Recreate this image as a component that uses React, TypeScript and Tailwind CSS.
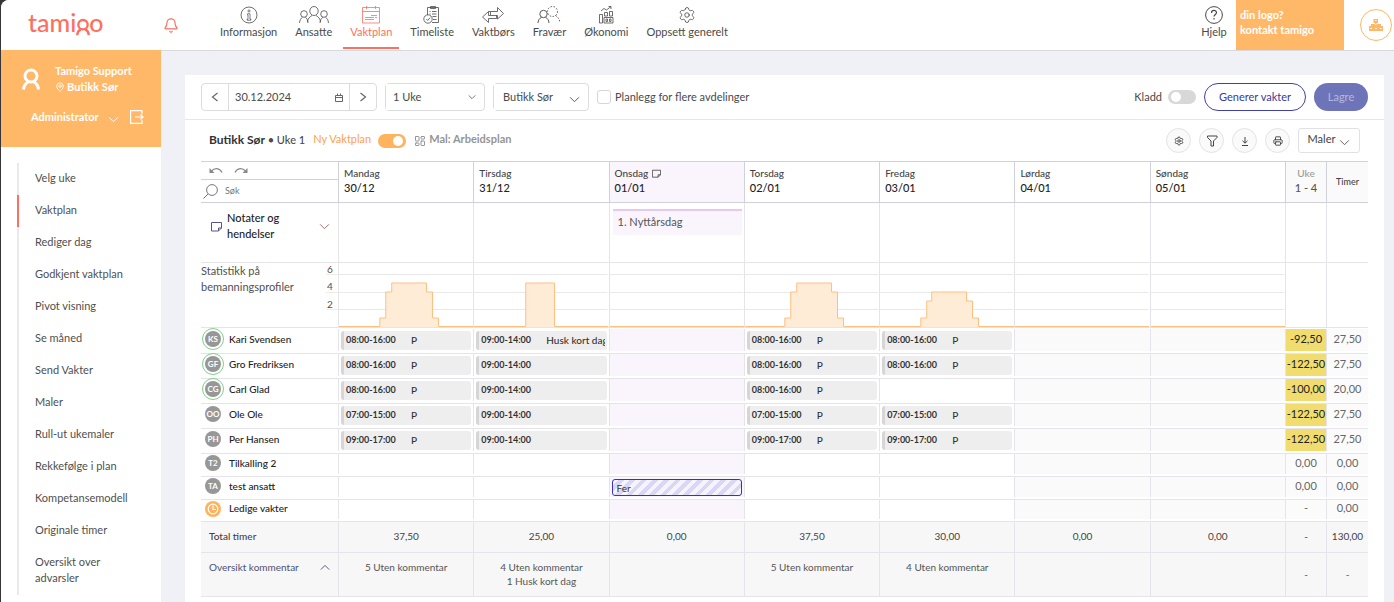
import React from "react";
import {
  Bell,
  LayoutDashboard,
  MapPin,
  Settings,
  Printer,
} from "lucide-react";

type IconProps = { className?: string };

function PersonMark({ className }: IconProps) {
  return (
    <svg viewBox="0 0 18 22" className={className} fill="none" stroke="currentColor" strokeWidth="3" aria-hidden="true">
      <circle cx="9" cy="8" r="6" />
      <path d="M1.500 21.500c.4-4.300 2.200-6.300 4.700-7.500M16.500 21.500c-.4-4.300-2.200-6.300-4.700-7.500" />
    </svg>
  );
}

function WideChevron({ className }: IconProps) {
  return (
    <svg viewBox="0 0 12 8" className={className} fill="none" stroke="currentColor" strokeWidth="1.100" aria-hidden="true">
      <path d="M1 1.500L6 6.500L11 1.500" />
    </svg>
  );
}

function SideChevron({ className }: IconProps) {
  return (
    <svg viewBox="0 0 8 10" className={className} fill="none" stroke="currentColor" strokeWidth="1.200" aria-hidden="true">
      <path d="M6.500 1L1.500 5L6.500 9" />
    </svg>
  );
}

function NoteIcon({ className }: IconProps) {
  return (
    <svg viewBox="0 0 11 11" className={className} fill="none" stroke="currentColor" aria-hidden="true">
      <path d="M.5 1.500h10v5.500l-3 3h-7zM10.500 7h-3v3" />
    </svg>
  );
}

function CurvedArrow({ className }: IconProps) {
  return (
    <svg viewBox="0 0 14 7" className={className} fill="none" stroke="currentColor" strokeWidth="1.200" aria-hidden="true">
      <path d="M2.500 4C5.500.5 10.500.5 13 5.500" />
      <path d="M.5 1v5h5z" fill="currentColor" stroke="none" />
    </svg>
  );
}

function TopIcon({ children, wide }: { children: React.ReactNode; wide?: boolean }) {
  return (
    <svg
      viewBox={wide ? "0 0 30 18" : "0 0 20 18"}
      className={wide ? "h-[18px] w-[30px]" : "h-[18px] w-5"}
      fill="none"
      stroke="currentColor"
      strokeWidth=".8"
      aria-hidden="true"
    >
      {children}
    </svg>
  );
}

const infoIcon = (
  <TopIcon>
    <circle cx="10" cy="9" r="8" />
    <circle cx="10" cy="5" r="1.100" strokeWidth=".7" />
    <path d="M8.500 7.800h2.500v5.400h1v1H8v-1h1V8.800h-.5z" strokeWidth=".7" />
  </TopIcon>
);

const staffIcon = (
  <TopIcon wide>
    <ellipse cx="15" cy="5" rx="4.200" ry="4.500" />
    <path d="M8.500 16c.3-3.500 2-5 4.500-6.500M21.500 16c-.3-3.500-2-5-4.500-6.500" />
    <circle cx="5" cy="8" r="3.300" />
    <circle cx="25" cy="8" r="3.300" />
    <path d="M.5 17c.2-2.800 1.300-4.600 3-5.700M9 17c-.2-2.800-1-4.600-2.700-5.700M21 17c.2-2.800 1.200-4.600 2.800-5.700M29.500 17c-.2-2.800-1.300-4.600-3-5.700" />
  </TopIcon>
);

const planIcon = (
  <TopIcon>
    <path d="M1.500 1.500h17v15.500h-17zM1.500 5.500h17M5.500 0v3M14.500 0v3M10 9.500h6M4 11.500h9M14 11.500h2M4 13.500h9" />
  </TopIcon>
);

const timesheetIcon = (
  <TopIcon>
    <path d="M5.500 9V1.500h11v15H10M8.500.5h5v2h-5zM7.500 5.500h1M10 5.500h4.500M7.500 8h1M10 8h4.500M10.500 10.500h4M11 13.500h3.500" />
    <circle cx="6" cy="13" r="4.200" />
    <path d="M4.300 13l1.400 1.400 2.500-2.800" />
  </TopIcon>
);

const exchangeIcon = (
  <svg viewBox="0 0 22 18" className="h-[18px] w-[22px]" fill="none" stroke="currentColor" strokeWidth=".8" aria-hidden="true">
    <path d="M8.500 5.500H15.500V1.500L21.500 7.500L15.500 13V9.500H8.500z" />
    <path d="M8.500 5.500H6.500L.5 11L6.500 16.500V12.500H14.500V9.500M6.500 5.500V9.500H8.500" />
  </svg>
);

const absenceIcon = (
  <svg viewBox="0 0 24 18" className="h-[18px] w-6" fill="none" stroke="currentColor" strokeWidth=".9" aria-hidden="true">
    <circle cx="6.500" cy="8" r="3.700" />
    <path d="M1 17c.2-3 1.500-4.600 3.500-5.700M12 17c-.2-3-1.500-4.600-3.500-5.700" />
    <g strokeDasharray="1.500 1.500">
      <circle cx="15.500" cy="5.500" r="5" />
      <path d="M18.500 9.500c2.500 1.500 4 3.500 4.300 7" />
    </g>
  </svg>
);

const economyIcon = (
  <TopIcon>
    <path d="M3.500 8.500h3v8.500h-3zM8.500 6.500h3v3.500h-3zM13.500 5.500h3v4.500h-3zM5 5l3-2.500 2.500 1.500L15 .5M12.500.5H15V3M8 11.500h9v5.500H8zM10 13h1.500v2.500H10zM13.500 13H15v2.500h-1.500z" />
  </TopIcon>
);

const setupIcon = <Settings className="size-[18px]" strokeWidth={1.1} aria-hidden="true" />;

const topNav = [
  { label: "Informasjon", icon: infoIcon },
  { label: "Ansatte", icon: staffIcon },
  { label: "Vaktplan", icon: planIcon, active: true },
  { label: "Timeliste", icon: timesheetIcon },
  { label: "Vaktbørs", icon: exchangeIcon },
  { label: "Fravær", icon: absenceIcon },
  { label: "Økonomi", icon: economyIcon },
  { label: "Oppsett generelt", icon: setupIcon },
];

const sideNav = [
  "Velg uke",
  "Vaktplan",
  "Rediger dag",
  "Godkjent vaktplan",
  "Pivot visning",
  "Se måned",
  "Send Vakter",
  "Maler",
  "Rull-ut ukemaler",
  "Rekkefølge i plan",
  "Kompetansemodell",
  "Originale timer",
  "Oversikt over advarsler",
];

const days = [
  { name: "Mandag", date: "30/12" },
  { name: "Tirsdag", date: "31/12" },
  { name: "Onsdag", date: "01/01", holiday: true },
  { name: "Torsdag", date: "02/01" },
  { name: "Fredag", date: "03/01" },
  { name: "Lørdag", date: "04/01" },
  { name: "Søndag", date: "05/01" },
];

const profiles = [
  "M0 63.500H41V55H47V29H53V20H88V29H94V55H100V63.500H135",
  "M0 63.500H52V20H81V63.500H135",
  "M0 63.500H135",
  "M0 63.500H40V55H46V29H52V20H87V29H93V55H99V63.500H135",
  "M0 63.500H41V55H47V38H52V29H87V38H93V55H99V63.500H135",
  "M0 63.500H135",
  "M0 63.500H135",
];

type Shift = { time: string; note?: string };
type Row = {
  initials: string;
  name: string;
  ring?: boolean;
  shifts: (Shift | null)[];
  week: string;
  hours: string;
  size: "tall" | "mid" | "low";
};

const p = (time: string): Shift => ({ time, note: "P" });
const evening: Shift = { time: "09:00-14:00" };

const rows: Row[] = [
  {
    initials: "KS", name: "Kari Svendsen", ring: true, week: "-92,50", hours: "27,50", size: "tall",
    shifts: [p("08:00-16:00"), { time: "09:00-14:00", note: "Husk kort dag" }, null, p("08:00-16:00"), p("08:00-16:00"), null, null],
  },
  {
    initials: "GF", name: "Gro Fredriksen", ring: true, week: "-122,50", hours: "27,50", size: "tall",
    shifts: [p("08:00-16:00"), evening, null, p("08:00-16:00"), p("08:00-16:00"), null, null],
  },
  {
    initials: "CG", name: "Carl Glad", ring: true, week: "-100,00", hours: "20,00", size: "tall",
    shifts: [p("08:00-16:00"), evening, null, p("08:00-16:00"), null, null, null],
  },
  {
    initials: "OO", name: "Ole Ole", week: "-122,50", hours: "27,50", size: "tall",
    shifts: [p("07:00-15:00"), evening, null, p("07:00-15:00"), p("07:00-15:00"), null, null],
  },
  {
    initials: "PH", name: "Per Hansen", week: "-122,50", hours: "27,50", size: "tall",
    shifts: [p("09:00-17:00"), evening, null, p("09:00-17:00"), p("09:00-17:00"), null, null],
  },
  { initials: "T2", name: "Tilkalling 2", week: "0,00", hours: "0,00", size: "mid", shifts: [null, null, null, null, null, null, null] },
  { initials: "TA", name: "test ansatt", week: "0,00", hours: "0,00", size: "mid", shifts: [null, null, { time: "Fer" }, null, null, null, null] },
  { initials: "", name: "Ledige vakter", week: "-", hours: "0,00", size: "low", shifts: [null, null, null, null, null, null, null] },
];

const rowHeight = { tall: "h-[22px]", mid: "h-5", low: "h-[19px]" };

const totals = ["37,50", "25,00", "0,00", "37,50", "30,00", "0,00", "0,00"];
const comments = [
  ["5 Uten kommentar"],
  ["4 Uten kommentar", "1 Husk kort dag"],
  [],
  ["5 Uten kommentar"],
  ["4 Uten kommentar"],
  [],
  [],
];

function Header() {
  return (
    <header className="flex h-[51px] shrink-0 border-b border-[#d9d9dc] bg-white">
      <div className="flex w-[212px] shrink-0 items-center justify-between pl-[27px] pr-[34px]">
        <a href="#" className="pb-[6px] text-[25px] font-medium leading-8 text-[#ff6f5e]">
          tami
          <span className="relative inline-block">
            <span className="text-transparent">g</span>
            <PersonMark className="absolute left-0 top-3 h-[18px] w-[14px]" />
          </span>
          o
        </a>
        <button type="button" aria-label="Varsler" className="text-[#ff6f5e]">
          <Bell className="h-[17px] w-4" strokeWidth={1.8} />
        </button>
      </div>
      <nav className="flex flex-1 gap-1 text-[11px] text-[#4a4a4a]">
        {topNav.map((item) => (
          <a
            key={item.label}
            href="#"
            className={
              item.active
                ? "flex h-[49px] flex-col items-center border-b-2 border-[#ff6f5e] px-[7px] pt-[6px] leading-[15px] text-[#ff6f5e]"
                : "flex h-[49px] flex-col items-center px-[7px] pt-[6px] leading-[15px]"
            }
          >
            {item.icon}
            {item.label}
          </a>
        ))}
      </nav>
      <a href="#" className="flex w-11 flex-col items-center pt-[6px] text-[11px] leading-4 text-[#4a4a4a]">
        <svg viewBox="0 0 18 18" className="size-[18px]" fill="none" stroke="currentColor" aria-hidden="true">
          <circle cx="9" cy="9" r="8.400" />
          <path d="M6.500 7c0-3.500 5-3.300 5-.4 0 1.800-2.500 1.900-2.500 4M9 12v1.500" strokeWidth="1.200" />
        </svg>
        Hjelp
      </a>
      <div className="h-[50px] w-[108px] bg-[#ffb868] px-1 pt-[7px] text-[11px] font-bold leading-[15px] text-white">
        din logo?
        <br />
        kontakt tamigo
      </div>
      <div className="flex h-[50px] w-[50px] items-center justify-end pr-[2px]">
        <button type="button" aria-label="Organisasjon" className="flex size-8 items-center justify-center rounded-full border border-[#ffb868] text-[#ffb868]">
          <svg viewBox="0 0 16 14" className="h-[14px] w-4" fill="currentColor" aria-hidden="true">
            <path fillRule="evenodd" d="M5.500 1h4.500v4H5.500zM7.200 2v1h1.300V2zM7.200 5h1.200v2H7.200zM3 6h10v2H3zM1 8h4.500v5H1zM2.400 10v1H4V10zM5.500 8h4.800v5H5.500zM7.200 10v1h1.600V10zM10.300 8H15v5h-4.700zM12 10v1h1.600V10z" />
          </svg>
        </button>
      </div>
    </header>
  );
}

function Sidebar() {
  return (
    <aside className="w-40 shrink-0 bg-white">
      <div className="-mt-px h-[97px] bg-[#ffb868] pt-[13px] text-[11px] font-bold leading-4 text-white">
        <div className="flex items-center pl-[21px]">
          <PersonMark className="h-[22px] w-[18px]" />
          <div className="pl-[15px]">
            <div>Tamigo Support</div>
            <div className="flex items-center gap-[2px]">
              <MapPin className="size-[10px]" strokeWidth={2} aria-hidden="true" />
              Butikk Sør
            </div>
          </div>
        </div>
        <div className="flex items-center pl-[30px] pt-[14px]">
          <button type="button" className="flex w-[88px] items-center justify-between">
            Administrator
            <WideChevron className="mt-1 h-[7px] w-[11px]" />
          </button>
          <button type="button" aria-label="Logg ut" className="pl-[11px]">
            <svg viewBox="0 0 14 14" className="size-[14px]" fill="none" stroke="currentColor" strokeWidth="1.200" aria-hidden="true">
              <path d="M12 4V.6H.6v12.800H12V10M5 7h8M10.500 4.500L13 7l-2.500 2.500" />
            </svg>
          </button>
        </div>
      </div>
      <nav className="ml-4 mt-4 w-[122px] text-[11px] leading-4 text-[#4f4f4f]">
        {sideNav.map((label) => (
          <a
            key={label}
            href="#"
            className={
              label === sideNav[1]
                ? "block border-l-2 border-[#ff6f5e] pb-[9px] pl-4 pt-[7px]"
                : "block border-l-2 border-[#eaeaea] pb-[9px] pl-4 pt-[7px]"
            }
          >
            {label}
          </a>
        ))}
      </nav>
    </aside>
  );
}

function Toolbar() {
  return (
    <div className="flex h-[45px] items-center gap-2 border-b border-[#e6e6e9] px-4 text-[11px] text-[#4a4a4a]">
      <div className="flex h-7 w-44 items-stretch rounded border border-[#dcdcde]">
        <button type="button" aria-label="Forrige" className="flex w-[27px] items-center justify-center border-r border-[#dcdcde] text-[#666]">
          <SideChevron className="h-[10px] w-2" />
        </button>
        <label className="flex min-w-0 flex-1 items-center pr-[6px]">
          <input aria-label="Dato" defaultValue="30.12.2024" className="w-full min-w-0 pl-[6px] outline-none" />
          <svg viewBox="0 0 8 9" className="h-[9px] w-2 shrink-0" fill="none" stroke="#666" aria-hidden="true">
            <path d="M.5 2.500h7v6h-7zM.5 4.500h7M2.500.5v2M5.500.5v2" />
          </svg>
        </label>
        <button type="button" aria-label="Neste" className="flex w-[27px] items-center justify-center border-l border-[#dcdcde] text-[#666]">
          <SideChevron className="h-[10px] w-2 rotate-180" />
        </button>
      </div>
      <div className="flex h-7 w-[100px] items-center rounded border border-[#dcdcde] pr-2">
        <select aria-label="Periode" className="h-full min-w-0 flex-1 appearance-none bg-white pl-[7px] outline-none">
          <option>1 Uke</option>
        </select>
        <WideChevron className="h-[6px] w-2 shrink-0" />
      </div>
      <div className="flex h-7 w-24 items-center rounded border border-[#dcdcde] pr-2">
        <select aria-label="Avdeling" className="h-full min-w-0 flex-1 appearance-none bg-white pl-[9px] outline-none">
          <option>Butikk Sør</option>
        </select>
        <WideChevron className="mt-1 h-[7px] w-[11px] shrink-0 text-[#3a5a80]" />
      </div>
      <label className="flex items-center gap-1">
        <input type="checkbox" className="size-[14px] appearance-none rounded-[3px] border border-[#d6d6d8] bg-white" />
        Planlegg for flere avdelinger
      </label>
      <label className="ml-auto flex items-center gap-[6px]">
        Kladd
        <span className="flex h-[14px] w-7 items-center rounded-full bg-[#d8d8d8] px-[3px]">
          <input type="checkbox" className="size-[10px] appearance-none rounded-full bg-white" />
        </span>
      </label>
      <button type="button" className="h-7 w-[102px] rounded-full border border-[#4040a8] text-[#3a3a9c]">
        Generer vakter
      </button>
      <button type="button" className="h-7 w-[54px] rounded-full bg-[#6e74b8] text-[#b4b8e0]">
        Lagre
      </button>
    </div>
  );
}

const roundButton = "flex size-[25px] items-center justify-center rounded-full border border-[#e3e3e8] bg-[#fafafa] text-[#444]";

function PlanBar() {
  return (
    <div className="flex h-[41px] items-center pl-6 pr-6 text-[11px]">
      <h1 className="pb-[2px] text-xs font-bold text-[#333]">
        Butikk Sør <span className="text-[11px] font-medium text-[#4a4a4a]">• Uke 1</span>
      </h1>
      <label className="flex items-center gap-[7px] pl-2 text-[#ff9f4c]">
        <span className="pb-[2px]">Ny Vaktplan</span>
        <span className="flex h-[14px] w-7 items-center justify-end rounded-full bg-[#ffb35c] px-[3px]">
          <input type="checkbox" defaultChecked className="size-[10px] appearance-none rounded-full bg-white" />
        </span>
      </label>
      <span className="flex items-center gap-[3px] pl-2 font-bold text-[#959595]">
        <LayoutDashboard className="size-3" strokeWidth={2} strokeLinejoin="miter" aria-hidden="true" />
        <span className="pb-[2px]">Mal: Arbeidsplan</span>
      </span>
      <div className="ml-auto flex items-center gap-2">
        <button type="button" aria-label="Innstillinger" className={roundButton}>
          <Settings className="size-[10px]" strokeWidth={2.2} />
        </button>
        <button type="button" aria-label="Filter" className={roundButton}>
          <svg viewBox="0 0 12 12" className="size-3" fill="none" stroke="currentColor" aria-hidden="true">
            <path d="M1.500 1h9.500v1.500L7.500 6v5H5V6L1.500 2.500z" />
          </svg>
        </button>
        <button type="button" aria-label="Last ned" className={roundButton}>
          <svg viewBox="0 0 10 10" className="size-[10px]" fill="none" stroke="currentColor" aria-hidden="true">
            <path d="M5 1v6M2.500 4.800L5 7.200l2.500-2.400M2 9.500h6" />
          </svg>
        </button>
        <button type="button" aria-label="Skriv ut" className={roundButton}>
          <Printer className="size-[10px]" strokeWidth={2.2} />
        </button>
        <button type="button" className="flex h-[25px] w-[62px] items-center justify-center gap-1 rounded-[3px] border border-[#e0e0e6] text-[#444]">
          <span className="pb-[2px]">Maler</span>
          <WideChevron className="mt-1 h-[7px] w-[11px] text-[#6a5a58]" />
        </button>
      </div>
    </div>
  );
}

const line = "border-[#e4e4ea]";
const headLine = "border-[#d0d1da]";

function ShiftPill({ shift }: { shift: Shift }) {
  return (
    <div className="flex h-[19px] items-center overflow-hidden whitespace-nowrap rounded-[3px] border-l-[3px] border-[#d6d6d6] bg-[#eeeeee] pl-[2px] text-[10px] text-[#333]">
      <span className="w-[65px] shrink-0 text-[9px] font-bold">{shift.time}</span>
      {shift.note && <span className={shift.note === "P" ? "font-medium" : "mr-[2px] overflow-hidden font-medium"}>{shift.note}</span>}
    </div>
  );
}

function DayCell({ row, index, first }: { row: Row; index: number; first: boolean }) {
  const shift = row.shifts[index];
  const base = "flex flex-col justify-center border-r px-[2px] " + line + " " + rowHeight[row.size];
  const fill = index === 2 ? " bg-[#faf4fc]" : index > 4 ? " bg-[#fafafa]" : "";
  return (
    <td className={first ? "border-b p-0 pb-[2px] pt-px " + line : "border-b p-0 pb-[2px] " + line}>
      <div className={base + fill}>
        {shift && shift.time !== "Fer" && <ShiftPill shift={shift} />}
        {shift && shift.time === "Fer" && (
          <div className="h-[17px] rounded-[3px] border border-[#3b30c4] bg-[repeating-linear-gradient(135deg,#f5f4fd_0px,#f5f4fd_4px,#dad7f6_4px,#dad7f6_8px)] pl-1 text-[10px] leading-4 text-[#333]">
            Fer
          </div>
        )}
      </div>
    </td>
  );
}

function Avatar({ row }: { row: Row }) {
  if (!row.initials) {
    return (
      <span className="flex size-4 shrink-0 items-center justify-center rounded-full bg-[#ffb35c] text-white">
        <svg viewBox="0 0 12 12" className="size-3" fill="none" stroke="currentColor" strokeWidth="1.200" aria-hidden="true">
          <circle cx="6" cy="6" r="4.800" />
          <path d="M6 2.500V6.500H9" />
        </svg>
      </span>
    );
  }
  return (
    <span
      className={
        row.ring
          ? "flex size-4 shrink-0 items-center justify-center rounded-full bg-[#979797] text-[8px] font-bold text-white outline outline-1 outline-offset-2 outline-[#7ed08b]"
          : "flex size-4 shrink-0 items-center justify-center rounded-full bg-[#979797] text-[8px] font-bold text-white"
      }
    >
      {row.initials}
    </span>
  );
}

function Schedule() {
  return (
    <table className={"w-full table-fixed border-separate border-spacing-0 border-t " + headLine}>
      <colgroup>
        <col className="w-[138px]" />
        {days.map((d) => (
          <col key={d.name} />
        ))}
        <col className="w-[41px]" />
        <col className="w-[41px]" />
      </colgroup>
      <thead>
        <tr className="h-[41px] text-left align-top">
          <th className={"border-b border-r p-0 font-normal " + headLine}>
            <div className={"flex h-[18px] items-center gap-[11px] border-b pl-2 text-[#8a8a8a] " + headLine}>
              <button type="button" aria-label="Angre">
                <CurvedArrow className="h-[7px] w-[14px]" />
              </button>
              <button type="button" aria-label="Gjør om">
                <CurvedArrow className="h-[7px] w-[14px] -scale-x-100" />
              </button>
            </div>
            <label className="flex h-[22px] items-center gap-[7px] pl-[2px] text-[9px] text-[#777]">
              <svg viewBox="0 0 15 15" className="size-[15px]" fill="none" stroke="currentColor" aria-hidden="true">
                <circle cx="9" cy="6" r="5.400" />
                <path d="M5 10L.5 14.500" />
              </svg>
              <input aria-label="Søk" placeholder="Søk" className="w-20 outline-none placeholder:text-[#777]" />
            </label>
          </th>
          {days.map((d) => (
            <th
              key={d.name}
              className={
                (d.holiday ? "bg-[#faf4fc] " : "") + "border-b border-r p-0 pl-[5px] pt-1 font-medium " + headLine
              }
            >
              <div className="flex items-center gap-1 text-[10px] leading-[15px] text-[#444]">
                {d.name}
                {d.holiday && <NoteIcon className="size-[9px]" />}
              </div>
              <div className="text-[11px] leading-[14px] text-[#222]">{d.date}</div>
            </th>
          ))}
          <th className={"border-b border-r bg-[#fafafa] p-0 pt-1 text-center font-medium " + headLine}>
            <div className="text-[10px] leading-[15px] text-[#999]">Uke</div>
            <div className="text-[11px] leading-[14px] text-[#555]">1 - 4</div>
          </th>
          <th className={"border-b bg-[#fafafa] p-0 text-center align-middle text-[9px] font-medium text-[#444] " + headLine}>
            Timer
          </th>
        </tr>
      </thead>
      <tbody>
        <tr className="h-[60px] align-top">
          <th className={"border-b border-r p-0 text-left font-normal " + line}>
            <button type="button" className="flex w-full items-center pl-[10px] pr-2 pt-[7px] text-left text-[11px] font-medium leading-4 text-[#222]">
              <NoteIcon className="size-[11px] text-[#55558a]" />
              <span className="flex-1 pl-[5px]">
                Notater og
                <br />
                hendelser
              </span>
              <WideChevron className="h-[7px] w-[11px] text-[#a06a6a]" />
            </button>
          </th>
          {days.map((d) => (
            <td key={d.name} className={"border-b border-r p-0 " + line}>
              {d.holiday && (
                <div className="ml-[3px] mr-[2px] mt-[6px] h-[26px] border-t-2 border-[#e6c8f2] bg-[#faf4fc] pl-[5px] text-[11px] leading-[22px] text-[#555]">
                  1. Nyttårsdag
                </div>
              )}
            </td>
          ))}
          <td className={"border-b border-r p-0 " + line} />
          <td className={"border-b p-0 " + line} />
        </tr>
        <tr className="h-[65px] align-top">
          <th className={"border-b border-r p-0 text-left font-normal " + line}>
            <div className="flex justify-between text-[11px] text-[#4f4f4f]">
              <span className="leading-4">
                Statistikk på
                <br />
                bemanningsprofiler
              </span>
              <span className="w-3 text-[10px]">
                <span className="block h-3 border-b border-[#ececef] pl-px leading-[12px]">6</span>
                <span className="block h-[18px] border-b border-[#ececef] pl-px leading-[23px]">4</span>
                <span className="block h-[17px] border-b border-[#ececef] pl-px leading-[22px]">2</span>
              </span>
            </div>
          </th>
          {days.map((d, i) => (
            <td key={d.name} className={"border-b border-r p-0 " + line}>
              <svg viewBox="0 0 135 64" preserveAspectRatio="none" className="block h-16 w-full" shapeRendering="crispEdges" aria-hidden="true">
                <path d="M0 11.500H134M0 29.500H134M0 46.500H134" stroke="#e9e9ed" fill="none" />
                <path d={profiles[i]} fill="#ffecd6" stroke="#ffbf80" />
              </svg>
            </td>
          ))}
          <td className={"border-b border-r p-0 " + line} />
          <td className={"border-b p-0 " + line} />
        </tr>
        {rows.map((row, r) => {
          const cell = (r === 0 ? "border-b p-0 pb-[2px] pt-px " : "border-b p-0 pb-[2px] ") + line;
          const negative = row.week.length > 4;
          return (
            <tr key={row.name}>
              <th className={cell}>
                <div className={"flex items-center gap-2 border-r pb-[2px] pl-1 text-[10px] font-medium text-[#222] " + line + " " + rowHeight[row.size]}>
                  <Avatar row={row} />
                  {row.name}
                </div>
              </th>
              {days.map((d, i) => (
                <DayCell key={d.name} row={row} index={i} first={r === 0} />
              ))}
              <td className={cell}>
                <div
                  className={
                    (negative ? "bg-[#f0dc6f] text-[#222] " : "bg-[#fbfbfb] text-[#666] ") +
                    "flex items-center justify-center border-r pb-[2px] text-[11px] " + line + " " + rowHeight[row.size]
                  }
                >
                  {row.week}
                </div>
              </td>
              <td className={cell}>
                <div className={"flex items-center justify-center bg-[#fbfbfb] pb-[2px] text-[11px] text-[#666] " + rowHeight[row.size]}>
                  {row.hours}
                </div>
              </td>
            </tr>
          );
        })}
        <tr className="h-[31px] bg-[#f7f7f7] text-center text-[10px] text-[#444]">
          <th className={"border-b border-r p-0 pb-[2px] pl-2 text-left font-medium " + line}>Total timer</th>
          {totals.map((t, i) => (
            <td key={i} className={"border-b border-r p-0 pb-[2px] " + line}>{t}</td>
          ))}
          <td className={"border-b border-r p-0 pb-[2px] " + line}>-</td>
          <td className={"border-b p-0 pb-[2px] " + line}>130,00</td>
        </tr>
        <tr className="h-11 bg-[#f7f7f7] text-center text-[10px] leading-[14px] text-[#555]">
          <th className={"border-b border-r p-0 pt-[7px] align-top font-normal text-[#4f4f70] " + line}>
            <button type="button" className="flex w-full items-center justify-between pl-2 pr-2">
              Oversikt kommentar
              <WideChevron className="h-[7px] w-[10px] rotate-180" />
            </button>
          </th>
          {comments.map((list, i) => (
            <td key={i} className={"border-b border-r p-0 pt-[7px] align-top " + line}>
              {list.map((c) => (
                <div key={c}>{c}</div>
              ))}
            </td>
          ))}
          <td className={"border-b border-r p-0 pb-[2px] " + line}>-</td>
          <td className={"border-b p-0 pb-[2px] " + line}>-</td>
        </tr>
      </tbody>
    </table>
  );
}

export default function App() {
  return (
    <div className="min-h-screen bg-[#37343a] pl-px font-['Lato','Noto_Sans',sans-serif]">
      <div className="flex min-h-screen flex-col overflow-hidden rounded-tl-lg bg-white">
        <Header />
        <div className="flex flex-1 bg-[#f0f1f7]">
          <Sidebar />
          <main className="ml-6 mr-[10px] mt-6 min-w-0 flex-1 bg-white">
            <Toolbar />
            <PlanBar />
            <div className="px-4">
              <Schedule />
            </div>
          </main>
        </div>
      </div>
    </div>
  );
}
